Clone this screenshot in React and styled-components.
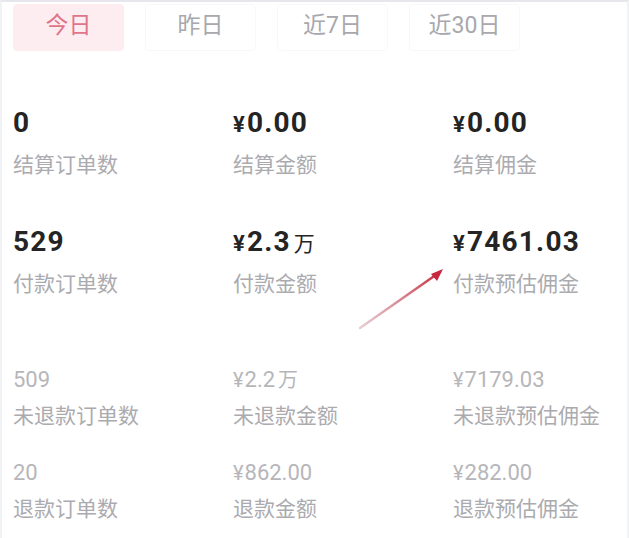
import React, { useState } from 'react';
import styled, { createGlobalStyle } from 'styled-components';

const GlobalStyle = createGlobalStyle`
  body {
    margin: 0;
    background: #ffffff;
    font-family: "Roboto", "Noto Sans CJK SC", sans-serif;
  }
`;

const Page = styled.div`
  position: relative;
  width: 629px;
  height: 538px;
  box-sizing: border-box;
  border-top: 2px solid #e6e6ec;
  border-left: 2px solid #f1f2f6;
  border-right: 2px solid #f1f2f6;
  padding: 2px 0 0 11px;
  overflow: hidden;
`;

const Tabs = styled.div`
  display: flex;
  gap: 21px;
`;

const Tab = styled.button`
  width: 111px;
  height: 47px;
  padding: 0 0 10px;
  border: 1px solid ${p => (p.$active ? '#fdebef' : '#f8f8fb')};
  border-radius: 4px;
  background: ${p => (p.$active ? '#fdedf1' : '#ffffff')};
  color: ${p => (p.$active ? '#e0748a' : '#a8a8ad')};
  font-family: "Roboto", "Noto Sans CJK SC", sans-serif;
  font-size: 23px;
  cursor: pointer;
`;

const Section = styled.div`
  display: grid;
  grid-template-columns: repeat(3, 220px);
  row-gap: ${p => p.$gap}px;
  margin-top: ${p => p.$top}px;
`;

const Stat = styled.div`
  display: flex;
  flex-direction: column;
  gap: ${p => (p.$muted ? 15 : 18)}px;
`;

const Value = styled.div`
  font-size: ${p => (p.$muted ? 22 : 28)}px;
  font-weight: ${p => (p.$muted ? 400 : 700)};
  letter-spacing: ${p => (p.$muted ? 0 : 1.2)}px;
  color: ${p => (p.$muted ? '#b6b6ba' : '#242424')};
  line-height: 1;
  white-space: nowrap;
`;

const Yen = styled.span`
  font-size: ${p => (p.$muted ? 20 : 22)}px;
  margin-right: 1px;
`;

const Unit = styled.span`
  font-size: ${p => (p.$muted ? 20 : 21)}px;
  font-weight: 400;
  margin-left: 3px;
`;

const Label = styled.div`
  font-size: 21px;
  color: #ababaf;
  line-height: 1;
  white-space: nowrap;
`;

const Arrow = styled.svg`
  position: absolute;
  left: 350px;
  top: 260px;
  pointer-events: none;
`;

const tabs = ['今日', '昨日', '近7日', '近30日'];

const primary = [
  { yen: false, num: '0', label: '结算订单数' },
  { yen: true, num: '0.00', label: '结算金额' },
  { yen: true, num: '0.00', label: '结算佣金' },
  { yen: false, num: '529', label: '付款订单数' },
  { yen: true, num: '2.3', unit: '万', label: '付款金额' },
  { yen: true, num: '7461.03', label: '付款预估佣金' },
];

const secondary = [
  { yen: false, num: '509', label: '未退款订单数' },
  { yen: true, num: '2.2', unit: '万', label: '未退款金额' },
  { yen: true, num: '7179.03', label: '未退款预估佣金' },
  { yen: false, num: '20', label: '退款订单数' },
  { yen: true, num: '862.00', label: '退款金额' },
  { yen: true, num: '282.00', label: '退款预估佣金' },
];

function StatItem({ item, muted }) {
  return (
    <Stat $muted={muted}>
      <Value $muted={muted}>
        {item.yen && <Yen $muted={muted}>¥</Yen>}
        {item.num}
        {item.unit && <Unit $muted={muted}>{item.unit}</Unit>}
      </Value>
      <Label>{item.label}</Label>
    </Stat>
  );
}

export default function App() {
  const [active, setActive] = useState(0);

  return (
    <>
      <GlobalStyle />
      <Page>
        <Tabs>
          {tabs.map((t, i) => (
            <Tab key={t} $active={active === i} onClick={() => setActive(i)}>
              {t}
            </Tab>
          ))}
        </Tabs>

        <Section $top={58} $gap={52}>
          {primary.map(item => (
            <StatItem key={item.label} item={item} />
          ))}
        </Section>

        <Section $top={74} $gap={35}>
          {secondary.map(item => (
            <StatItem key={item.label} item={item} muted />
          ))}
        </Section>

        {/* red annotation arrow drawn over the screenshot */}
        <Arrow width="100" height="75" viewBox="0 0 100 75">
          <defs>
            <linearGradient id="arrowFade" x1="0" y1="1" x2="1" y2="0">
              <stop offset="0" stopColor="#c9909a" stopOpacity="0.45" />
              <stop offset="1" stopColor="#c8283c" />
            </linearGradient>
          </defs>
          <path d="M8 66 L88 10" stroke="url(#arrowFade)" strokeWidth="2.5" strokeLinecap="round" />
          <path d="M91 7 L79 12 L85 19 Z" fill="#c8283c" />
        </Arrow>
      </Page>
    </>
  );
}
